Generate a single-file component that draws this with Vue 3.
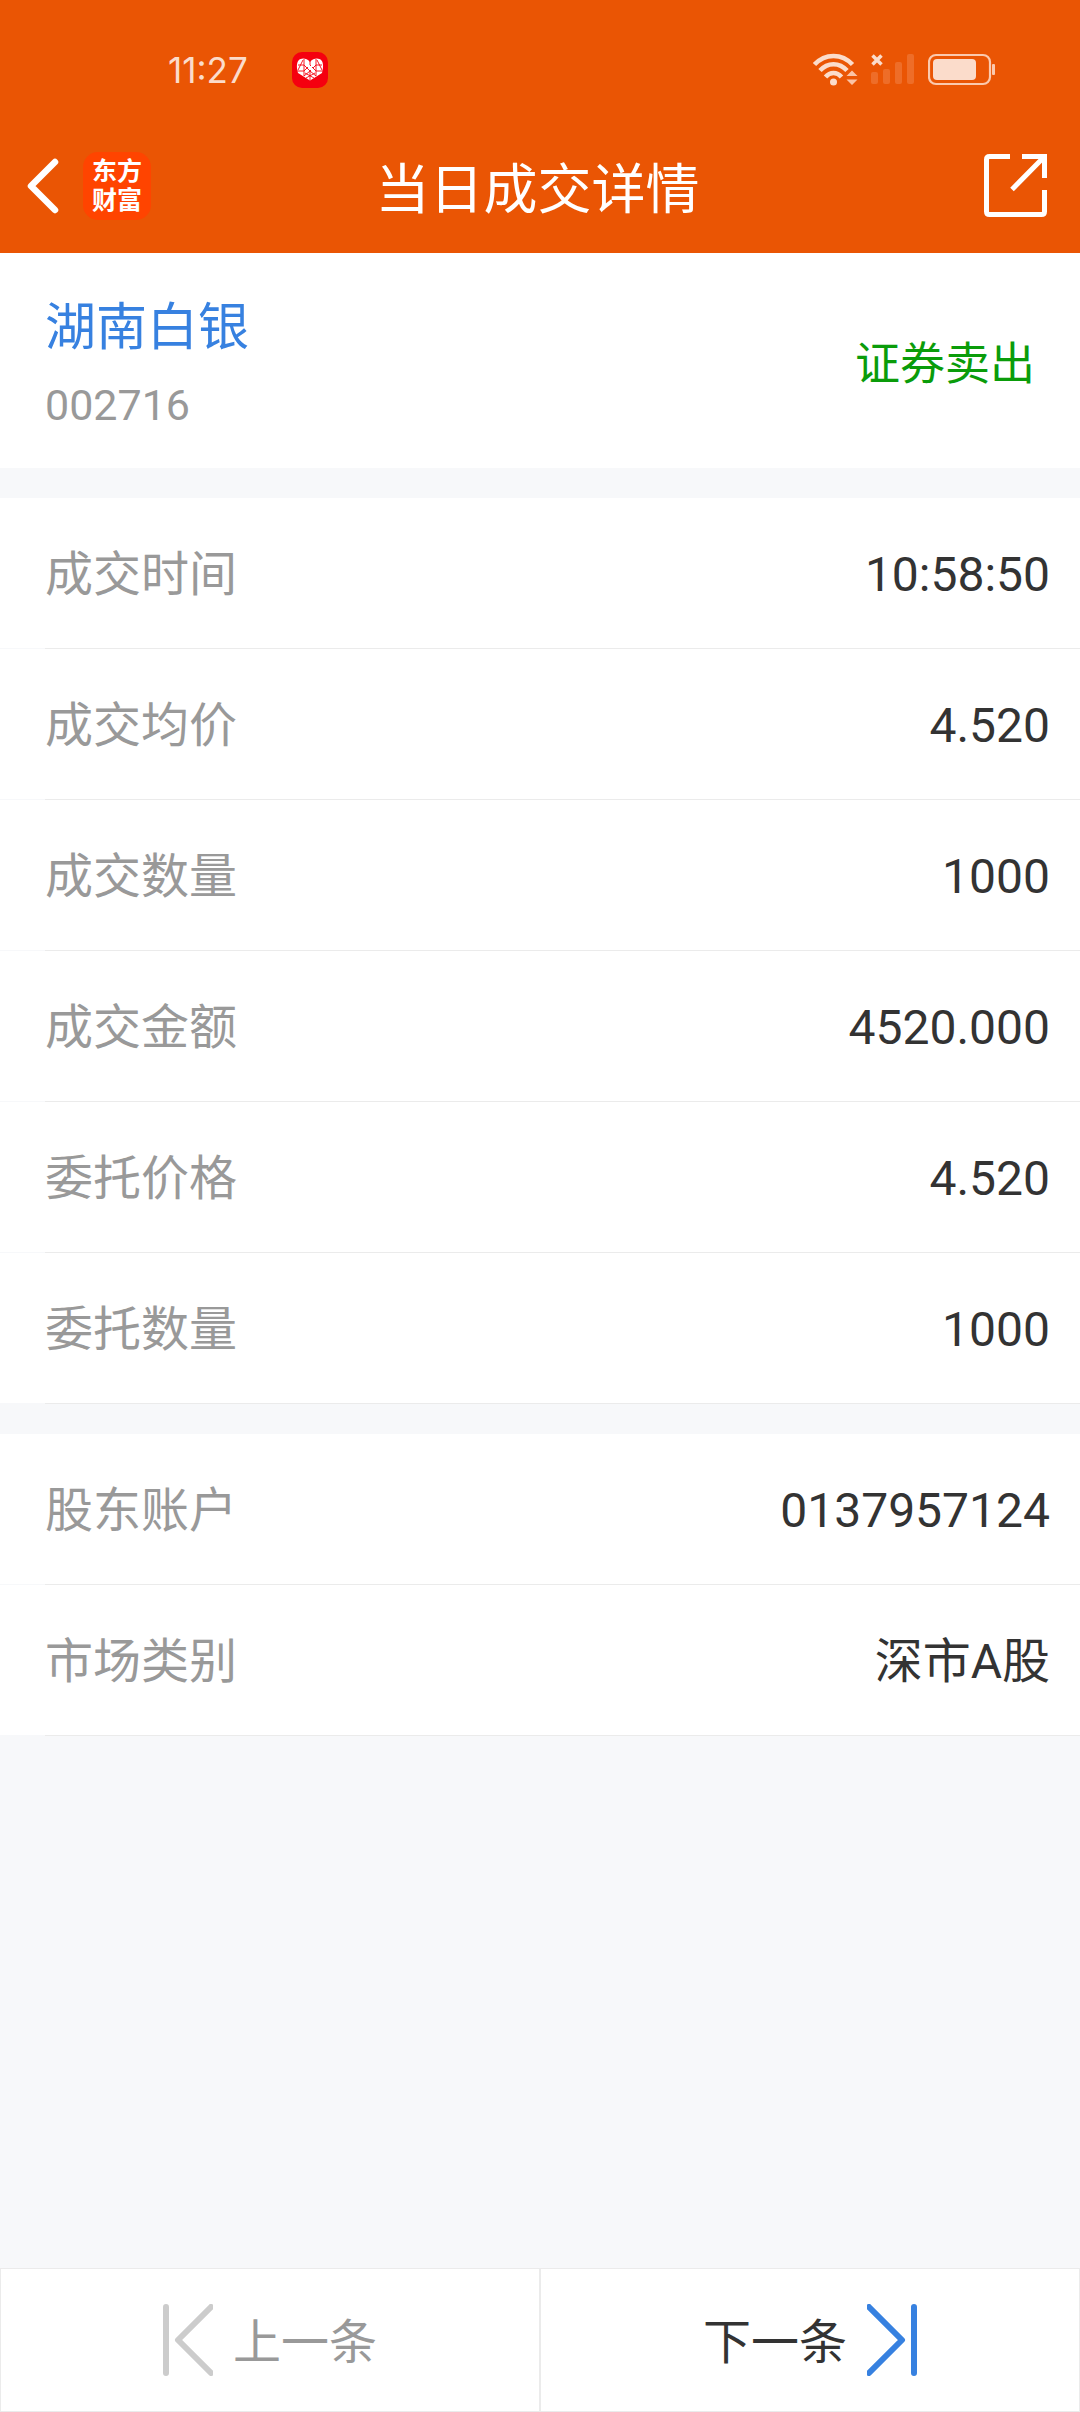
<template>
  <div class="page">
    <header class="header">
      <div class="status-bar">
        <span class="status-time">11:27</span>
        <svg class="status-app" viewBox="0 0 36 36">
          <rect width="36" height="36" rx="10" fill="#f5000f" />
          <path d="M18 28.500 L6 21 C4.500 16 4.500 11 6.500 8.500 C9 6 14 5.500 18 10 C22 5.500 27 6 29.500 8.500 C31.500 11 31.500 16 30 21 Z" fill="#fff" />
          <g fill="none" stroke="#f5000f" stroke-width="0.900">
            <path d="M12 7 V24 M24 7 V24 M5 19 H12 L18 13 L24 19 H31 M6 13 H12 L18 19 L24 13 H30 M12 24 L18 19 L24 24 M18 9 V13 M18 19 V28" />
            <path d="M6 18 L11 8 M30 18 L25 8 M13 21 L22 26 M23 21 L14 26" />
          </g>
          <path d="M16 14 h1 v-1 h1 v1 h1 v-1 h1 v1 h1 v1 h-1 v1 h1 v1 h-1 v1 h-1 v-1 h-1 v1 h-1 v-1 h-1 v-1 h1 v-1 h-1 Z" fill="#fff" />
        </svg>
        <div class="status-icons">
          <svg width="45" height="36" viewBox="0 0 45 36">
            <g fill="none" stroke="#fbdccb" stroke-width="4.500">
              <path d="M1.500 12.500 C12 1 29 1 39.500 12.500" />
              <path d="M7 18.500 C14.500 10 26.500 10 34 18.500" />
              <path d="M12.500 25 C17 19.500 24 19.500 28.500 25" />
            </g>
            <circle cx="20.500" cy="30" r="3.500" fill="#fbdccb" />
            <path d="M39 18.500 L44.500 24 H33.500 Z M39 33 L44.500 27.500 H33.500 Z" fill="#fbc3a5" />
          </svg>
          <svg width="44" height="36" viewBox="0 0 44 36">
            <g fill="#ee6d28">
              <rect x="0" y="20" width="7" height="12" rx="2" />
              <rect x="12" y="17" width="7" height="15" rx="2" />
              <rect x="24" y="10" width="7" height="22" rx="2" />
              <rect x="36" y="2" width="7" height="30" rx="2" />
            </g>
            <path d="M1.500 3.500 L10.500 12.500 M10.500 3.500 L1.500 12.500" fill="none" stroke="#fbdccb" stroke-width="3.500" />
          </svg>
          <svg width="68" height="36" viewBox="0 0 68 36">
            <rect x="1" y="3" width="61" height="29" rx="7" fill="none" stroke="#fbc9ae" stroke-width="2.200" />
            <rect x="5" y="7" width="43" height="21" rx="4" fill="#fbdccb" />
            <rect x="64" y="12" width="3" height="11" rx="1" fill="#fbc9ae" />
          </svg>
        </div>
      </div>

      <nav class="nav-bar">
        <div class="nav-left">
          <button class="icon-btn" type="button" aria-label="返回" @click="goBack">
            <svg width="32" height="56" viewBox="0 0 32 56">
              <path d="M28 4 L4 28 L28 52" fill="none" stroke="#fff" stroke-width="6.500" stroke-linecap="round" stroke-linejoin="round" />
            </svg>
          </button>
          <div class="app-logo">
            <span>东方</span>
            <span>财富</span>
          </div>
        </div>
        <h1 class="nav-title">当日成交详情</h1>
        <div class="nav-right">
          <button class="icon-btn" type="button" aria-label="分享">
            <svg width="64" height="64" viewBox="0 0 64 64">
              <g fill="none" stroke="#fff" stroke-width="5">
                <path d="M26 2.500 H5.500 Q2.500 2.500 2.500 5.500 V57.500 Q2.500 60.500 5.500 60.500 H57.500 Q60.500 60.500 60.500 57.500 V36" />
                <path d="M38 2.500 H60.500 V24 M60 3 L28 35.500" />
              </g>
            </svg>
          </button>
        </div>
      </nav>
    </header>

    <main class="content">
      <section class="stock">
        <div class="stock-info">
          <h2 class="stock-name">{{ stock.name }}</h2>
          <p class="stock-code">{{ stock.code }}</p>
        </div>
        <span class="stock-side">{{ stock.side }}</span>
      </section>

      <dl v-for="(group, index) in groups" :key="index" class="group">
        <div v-for="item in group" :key="item.label" class="row">
          <div class="row-inner">
            <dt>{{ item.label }}</dt>
            <dd>{{ item.value }}</dd>
          </div>
        </div>
      </dl>
    </main>

    <footer class="pager">
      <button class="pager-btn prev" type="button" disabled>
        <svg width="50" height="72" viewBox="0 0 50 72">
          <path d="M3 3 V69 M48 3 L15 36 L48 69" fill="none" stroke="#ccc" stroke-width="6" stroke-linecap="round" stroke-linejoin="round" />
        </svg>
        <span>上一条</span>
      </button>
      <button class="pager-btn" type="button">
        <span>下一条</span>
        <svg width="50" height="72" viewBox="0 0 50 72">
          <path d="M47 3 V69 M2 3 L35 36 L2 69" fill="none" stroke="#3781e0" stroke-width="6" stroke-linecap="round" stroke-linejoin="round" />
        </svg>
      </button>
    </footer>
  </div>
</template>

<script setup>
import { reactive } from 'vue';

const stock = reactive({
  name: '湖南白银',
  code: '002716',
  side: '证券卖出'
});

const groups = [
  [
    { label: '成交时间', value: '10:58:50' },
    { label: '成交均价', value: '4.520' },
    { label: '成交数量', value: '1000' },
    { label: '成交金额', value: '4520.000' },
    { label: '委托价格', value: '4.520' },
    { label: '委托数量', value: '1000' }
  ],
  [
    { label: '股东账户', value: '0137957124' },
    { label: '市场类别', value: '深市A股' }
  ]
];

const goBack = () => {
  window.history.back();
};
</script>

<style>
body {
  margin: 0;
  background: #f7f8fa;
}
</style>

<style scoped>
.page {
  min-height: 100vh;
  display: flex;
  flex-direction: column;
  background: #f7f8fa;
  color: #333;
  font-family: Roboto, "Noto Sans CJK SC", sans-serif;
}

.header {
  background: #ea5504;
  color: #fff;
}

.status-bar {
  display: flex;
  align-items: center;
  padding: 48px 84px 26px 168px;
}

.status-time {
  width: 124px;
  color: #fbdccb;
  font-family: Inter, sans-serif;
  font-size: 35px;
  line-height: 44px;
}

.status-app {
  width: 36px;
  height: 36px;
}

.status-icons {
  display: flex;
  gap: 13px;
  margin-left: auto;
}

.nav-bar {
  display: grid;
  grid-template-columns: 1fr auto 1fr;
  align-items: center;
  height: 135px;
  padding: 0 32px 0 27px;
}

.nav-left {
  display: flex;
  align-items: center;
  gap: 24px;
}

.nav-right {
  display: flex;
  justify-content: flex-end;
}

.icon-btn {
  display: flex;
  padding: 0;
  border: none;
  background: none;
  cursor: pointer;
}

.app-logo {
  display: flex;
  flex-direction: column;
  align-items: center;
  justify-content: center;
  width: 68px;
  height: 68px;
  border-radius: 15px;
  background: #ff4400;
  font-size: 25px;
  font-weight: 700;
  line-height: 29px;
}

.nav-title {
  margin: 0;
  padding-top: 10px;
  font-size: 54px;
  font-weight: 400;
  line-height: 80px;
}

.stock {
  display: flex;
  align-items: center;
  justify-content: space-between;
  padding: 30px 45px;
  background: #fff;
}

.stock-info {
  padding-top: 5px;
}

.stock-name {
  margin: 0;
  color: #3781e0;
  font-size: 51px;
  font-weight: 400;
  line-height: 80px;
}

.stock-code {
  margin: 0;
  padding-top: 4px;
  color: #999;
  font-size: 43px;
  line-height: 66px;
}

.stock-side {
  color: #0a9c0a;
  font-size: 45px;
}

.group {
  margin: 30px 0 0;
  font-size: 48px;
  line-height: 70px;
}

.row-inner {
  display: flex;
  align-items: center;
  justify-content: space-between;
  padding: 42px 30px 38px 45px;
  background: #fff;
}

.row::after {
  content: "";
  display: block;
  height: 1px;
  margin-left: 45px;
  background: #ebebeb;
}

dt {
  color: #999;
}

dd {
  margin: 0;
}

.pager {
  display: flex;
  margin-top: auto;
}

.pager-btn {
  flex: 1;
  display: flex;
  align-items: center;
  justify-content: center;
  gap: 20px;
  padding: 33px 0;
  border: 1px solid #ebebeb;
  background: #fff;
  color: #333;
  font-family: inherit;
  font-size: 48px;
  line-height: 70px;
  cursor: pointer;
}

.pager-btn span {
  padding-top: 6px;
}

.prev {
  color: #999;
  cursor: default;
}
</style>
